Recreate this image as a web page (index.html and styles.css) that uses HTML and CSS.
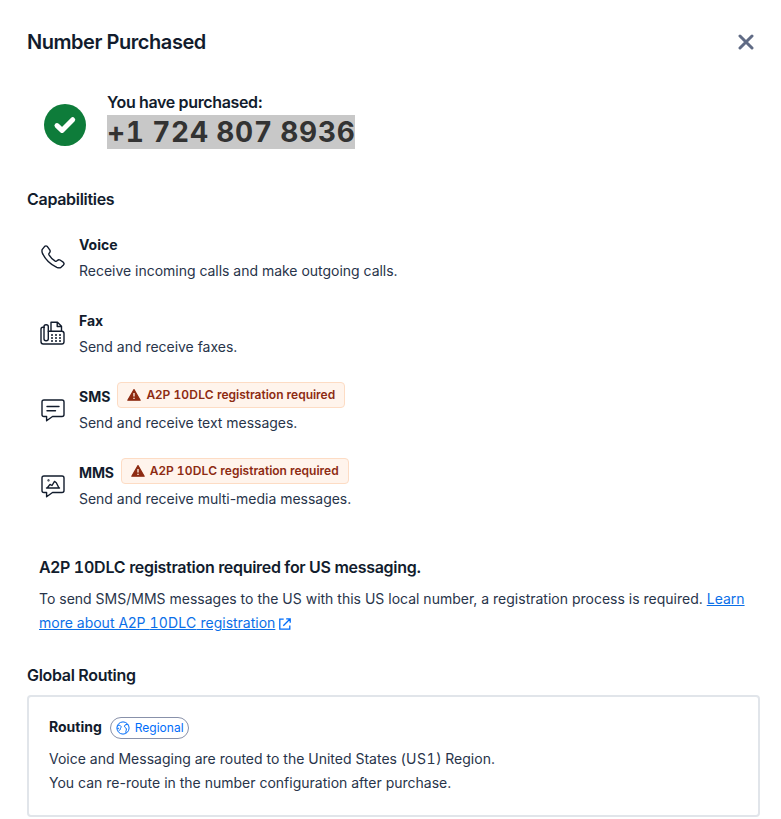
FILE: index.html
```html
<!DOCTYPE html>
<html lang="en">
<head>
<meta charset="utf-8">
<title>Number Purchased</title>
<link rel="stylesheet" href="styles.css">
</head>
<body>
<main class="dialog">
  <header class="header">
    <h1 class="title">Number Purchased</h1>
    <button class="close" aria-label="Close">
      <svg width="16" height="16" viewBox="0 0 16 16" fill="none" stroke="currentColor" stroke-width="3" stroke-linecap="round"><path d="M2 2l12 12M14 2L2 14"/></svg>
    </button>
  </header>

  <section class="purchase">
    <svg class="success" width="42" height="42" viewBox="0 0 42 42" fill="none"><circle cx="21" cy="21" r="21" fill="#0e7c3a"/><path d="M13 21.6l5 4.8 10.7-10.7" stroke="#fff" stroke-width="5" stroke-linecap="round" stroke-linejoin="round"/></svg>
    <div>
      <div class="purchase-label">You have purchased:</div>
      <div class="number"><span class="selected">+1 724 807 8936</span></div>
    </div>
  </section>

  <h2 class="heading">Capabilities</h2>
  <ul class="capabilities">
    <li class="capability">
      <svg class="icon" width="26" height="26" viewBox="0 0 26 26"><path d="M2.3 5.4L4.7 2.4Q6 1.3 7.4 2.6L9.9 6.2Q10.6 7.5 9.5 8.7Q8.4 9.8 9 10.9Q11.4 14.9 15.2 17.2Q16.3 17.8 17.4 16.4Q18.6 15.2 20 16L23.2 18.2Q24.7 19.5 23.5 20.9L21 23.3Q19.4 24.4 16.8 23.4Q6.8 18.7 2.5 9.4Q1.5 6.9 2.3 5.4Z"/></svg>
      <div><div class="name">Voice</div><div class="text">Receive incoming calls and make outgoing calls.</div></div>
    </li>
    <li class="capability">
      <svg class="icon" width="26" height="26" viewBox="0 0 26 26"><path d="M4.2 7.3H2.8Q1 7.3 1 9.2V21.5Q1 24 3.2 24H21.8Q24 24 24 21.8V13.5Q24 11.3 21.8 11.3H8.3"/><rect x="4" y="4.8" width="4.3" height="16" rx="2"/><path d="M11 11V2.2H17.5L21.5 6.2V11M17.2 2.4V6.5H21.3"/><path class="keys" d="M11 15h2M15 15h2M19 15h2M11 18h2M15 18h2M19 18h2M11 21h2M15 21h2M19 21h2"/></svg>
      <div><div class="name">Fax</div><div class="text">Send and receive faxes.</div></div>
    </li>
    <li class="capability">
      <svg class="icon icon-message" width="26" height="26" viewBox="0 0 26 26"><path d="M4 3H22Q24 3 24 5V17.5Q24 19.5 22 19.5H12.5L6.6 23.8V19.5H4Q2 19.5 2 17.5V5Q2 3 4 3Z"/><path d="M7 9.5H19M7 13.8H15.5"/></svg>
      <div><div class="name">SMS<span class="badge"><svg width="14" height="12" viewBox="0 0 14 12"><path d="M7 0.6L13.2 11.2H.8Z" fill="#8d2b12" stroke="#8d2b12" stroke-width="1.2" stroke-linejoin="round"/><path d="M7 4v3.4M7 8.7v1.2" stroke="#fff4ec" stroke-width="1.3"/></svg><span>A2P <span class="num">10DLC</span> registration required</span></span></div><div class="text">Send and receive text messages.</div></div>
    </li>
    <li class="capability">
      <svg class="icon icon-message" width="26" height="26" viewBox="0 0 26 26"><path d="M4 3H22Q24 3 24 5V17.5Q24 19.5 22 19.5H12.5L6.6 23.8V19.5H4Q2 19.5 2 17.5V5Q2 3 4 3Z"/><path d="M6.5 15H19.5M7.2 15L10 11.4L12 12.5L14.5 8.4L16.3 9.7L19 15"/><circle cx="8.5" cy="7.4" r=".4"/></svg>
      <div><div class="name name-mms">MMS<span class="badge"><svg width="14" height="12" viewBox="0 0 14 12"><path d="M7 0.6L13.2 11.2H.8Z" fill="#8d2b12" stroke="#8d2b12" stroke-width="1.2" stroke-linejoin="round"/><path d="M7 4v3.4M7 8.7v1.2" stroke="#fff4ec" stroke-width="1.3"/></svg><span>A2P <span class="num">10DLC</span> registration required</span></span></div><div class="text">Send and receive multi-media messages.</div></div>
    </li>
  </ul>

  <section class="registration">
    <h2 class="heading">A2P <span class="num">10DLC</span> registration required for US messaging.</h2>
    <p class="text">To send SMS/MMS messages to the US with this US local number, a registration process is required. <a class="link" href="#">Learn<br>more about A2P <span class="num">10DLC</span> registration</a><svg class="external" width="12" height="12" viewBox="0 0 12 12"><path d="M4.7 1.2H.8V11.2H10.8V7.4M7.2.8H11.2V4.8M11 1L4.3 7.7"/></svg></p>
  </section>

  <h2 class="heading">Global Routing</h2>
  <section class="routing">
    <div class="name">Routing<span class="pill"><svg width="14" height="14" viewBox="0 0 14 14"><circle cx="7" cy="7" r="6.1"/><path d="M1.2 5.3C2.5 3.8 4.4 4.2 5 5.3C5.5 6.5 4.3 7.1 4.3 8C4.2 9 3.4 9.7 2.6 9.2M12.5 4.2C11.2 3 8.5 3.4 8.5 5.2C8.5 7 10.4 6.5 10.4 8C10.4 9.6 9.5 10.2 10 12M1.2 7.3H3"/></svg>Regional</span></div>
    <p class="text">Voice and Messaging are routed to the United States (<span class="num">US1</span>) Region.<br>You can re-route in the number configuration after purchase.</p>
  </section>
</main>
</body>
</html>
```
FILE: styles.css
```css
* { box-sizing: border-box; margin: 0; padding: 0; }
body { background: #fff; color: #121c2d; font: 14px/24px Inter, sans-serif; }
svg { display: block; flex: none; }
.num { font-variant-numeric: tabular-nums; letter-spacing: 0.2px; }
.routing .num { letter-spacing: 0.6px; }
.heading .num { letter-spacing: -0.2px; }
.dialog { padding: 28px 21px 0 27px; }
.header { display: flex; justify-content: space-between; align-items: center; height: 28px; padding-right: 6px; }
.title { font-size: 20px; line-height: 28px; font-weight: 600; letter-spacing: -0.45px; }
.close { border: 0; background: none; color: #606b85; }
.purchase { display: flex; gap: 21px; padding: 36px 0 0 17px; height: 131px; }
.success { margin-top: 12px; }
.purchase-label { font-size: 16px; line-height: 20px; font-weight: 600; letter-spacing: -0.35px; }
.number { font-size: 28px; font-weight: 700; color: #333; letter-spacing: 0.75px; word-spacing: -0.8px; font-variant-numeric: tabular-nums; }
.selected { display: block; width: 248px; height: 34px; line-height: 34px; margin-top: 3px; background: #c8c8c8; white-space: nowrap; }
.heading { font-size: 16px; line-height: 24px; font-weight: 600; letter-spacing: -0.3px; }
.capabilities { list-style: none; margin-top: 22px; }
.capability { display: flex; gap: 13px; height: 76px; padding-left: 13px; }
.icon { width: 26px; height: 26px; margin-top: 11px; fill: none; stroke: #121c2d; stroke-width: 1.4; stroke-linecap: round; stroke-linejoin: round; }
.icon-message { margin-top: 12px; }
.keys { stroke-linecap: butt; }
.name { display: flex; height: 24px; line-height: 24px; font-weight: 700; }
.capability .text { margin-top: 2px; letter-spacing: -0.02px; }
.text { color: #28344a; }
.badge { display: flex; align-items: center; gap: 5px; height: 26px; margin: -3px 0 0 7px; padding: 0 9px; border: 1px solid #fddcc4; border-radius: 4px; background: #fff4ec; color: #8d2b12; font-size: 12px; font-weight: 600; }
.name-mms { letter-spacing: -0.15px; }
.name-mms .badge { letter-spacing: 0; }
.registration { padding: 18px 0 0 12px; height: 126px; }
.registration .text { margin-top: 8px; white-space: nowrap; }
.link { color: #0b6fe8; text-decoration: underline; }
.external { display: inline-block; margin-left: 4px; vertical-align: -2px; fill: none; stroke: #006dfa; stroke-width: 1.3; }
.routing { height: 122px; margin-top: 8px; padding: 18px 20px; border: 2px solid #e1e5ea; border-radius: 4px; }
.pill { display: flex; align-items: center; gap: 5px; height: 22px; margin: 2px 0 0 8px; padding: 0 4px 0 5px; border: 1px solid #8891aa; border-radius: 11px; color: #006dfa; font-size: 12px; font-weight: 400; }
.pill svg { fill: none; stroke: #006dfa; stroke-width: 1; }
.routing .text { margin-top: 8px; }
```
